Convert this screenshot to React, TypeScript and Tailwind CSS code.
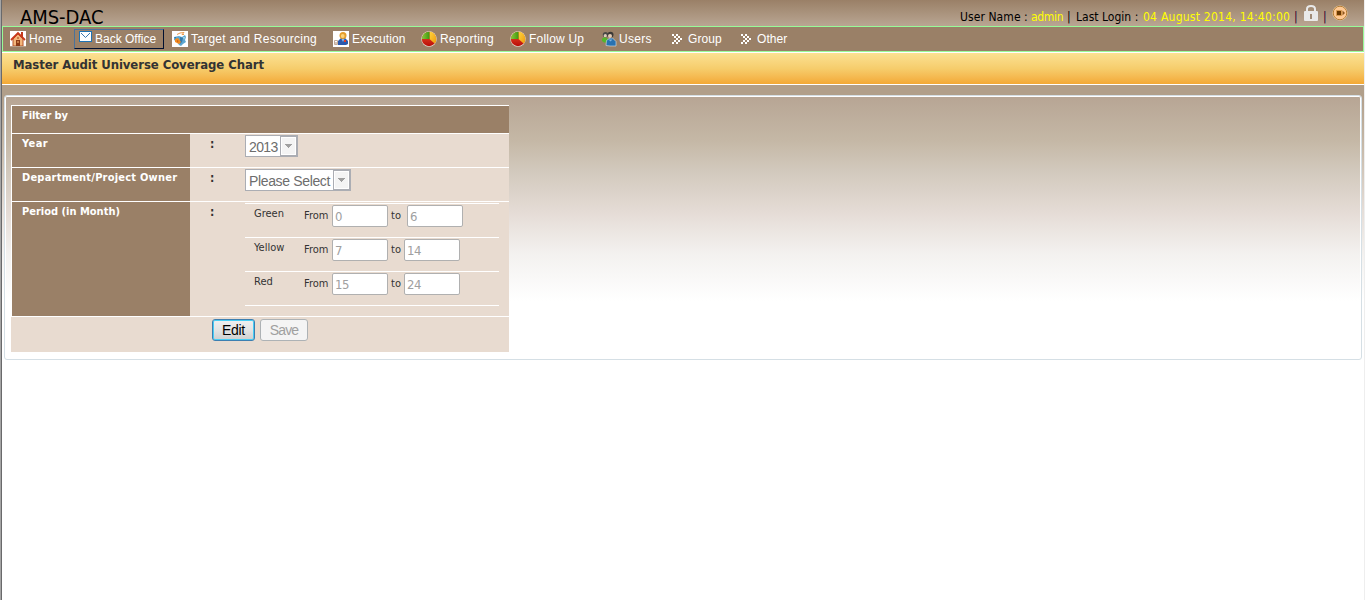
import React from "react";

const pixelFont = "font-['DejaVu_Sans_Condensed','DejaVu_Sans',sans-serif] [font-stretch:condensed]";

function HomeIcon() {
  return (
    <svg width="16" height="16" viewBox="0 0 16 16" className="block shrink-0">
      <rect width="16" height="16" fill="#fff" />
      <path d="M11 1h2v5h-2z" fill="#c43a1c" />
      <path d="M3 8l5-5 5 5v7H3z" fill="#f3b67c" stroke="#b5532a" />
      <path d="M1 9L8 2l7 7" fill="none" stroke="#c8381a" strokeWidth="1.800" />
      <path d="M6 9h4v6H6z" fill="#8b3a16" />
      <path d="M7 10h2v2H7zM7 6h2v2H7z" fill="#c77b45" />
      <path d="M0 15.500h16" stroke="#b9a08a" />
    </svg>
  );
}

function MailIcon() {
  return (
    <svg width="13" height="11" viewBox="0 0 13 11" className="block shrink-0">
      <rect x=".5" y=".5" width="12" height="10" fill="#fff" stroke="#1f73b4" />
      <path d="M2 2l4.500 4.500L11 2" fill="none" stroke="#3f78ad" />
    </svg>
  );
}

function TargetIcon() {
  return (
    <svg width="16" height="16" viewBox="0 0 16 16" className="block shrink-0">
      <rect width="16" height="16" fill="#fff" />
      <path d="M5 3.500l3-1.500 4-.5-2 2h2" fill="none" stroke="#ec9a4c" />
      <path d="M2 6l5-1 3 1 3-2 1 2-1 3 1 2-3 2-2 2-2-1-2-3-3-2z" fill="#5da6cf" />
      <path d="M8 6l3 1-1 4-2 2zM2 6l2 0 0 2z" fill="#3579aa" />
      <path d="M3 8l3-1 1.500 2L9 11l-2 2-2-1-2-1z" fill="#f18b22" />
      <path d="M5 9l1.500 1-1 1.500z" fill="#c05518" />
      <path d="M11 6l2 0-1 3z" fill="#a8d8f0" />
    </svg>
  );
}

function ExecutionIcon() {
  return (
    <svg width="16" height="16" viewBox="0 0 16 16" className="block shrink-0">
      <rect width="16" height="16" fill="#fff" />
      <path d="M5 14v-4l3-3h4l3 3v3l-2 1z" fill="#2a59ad" />
      <circle cx="10" cy="4.500" r="3.500" fill="#e59d2a" />
      <circle cx="9.700" cy="5" r="1.900" fill="#fbd27a" />
      <path d="M8.500 8l1.500 3 1.500-3" fill="#8db9ec" />
      <path d="M11 9h2v2h-2z" fill="#df3b24" />
      <path d="M1.500 9.500h3v4h-3z" fill="#fff" stroke="#c3ab98" />
      <path d="M3 11v2" stroke="#ad8c72" />
    </svg>
  );
}

function PieIcon() {
  return (
    <svg width="16" height="16" viewBox="0 0 16 16" className="block shrink-0">
      <defs>
        <linearGradient id="pieRed" x1="0" y1="0" x2="0" y2="1">
          <stop offset="0" stopColor="#f0522c" />
          <stop offset="1" stopColor="#b80c08" />
        </linearGradient>
        <linearGradient id="pieGreen" x1="0" y1="0" x2="1" y2="0">
          <stop offset="0" stopColor="#8cc63a" />
          <stop offset="1" stopColor="#3f9a10" />
        </linearGradient>
        <linearGradient id="pieGold" x1="0" y1="0" x2="1" y2="1">
          <stop offset="0" stopColor="#ffd43c" />
          <stop offset="1" stopColor="#ee9c10" />
        </linearGradient>
      </defs>
      <circle cx="8" cy="8" r="7.700" fill="#eee7de" />
      <circle cx="8" cy="8" r="7.200" fill="url(#pieRed)" />
      <path d="M8.500 8V.8A7.200 7.200 0 0 1 13.600 12.600z" fill="url(#pieGold)" />
      <path d="M8.500 8H.8A7.200 7.200 0 0 1 8.500.8z" fill="url(#pieGreen)" />
    </svg>
  );
}

function UsersIcon() {
  return (
    <svg width="16" height="16" viewBox="0 0 16 16" className="block shrink-0">
      <circle cx="4.500" cy="3.700" r="2.700" fill="#4b4a48" />
      <circle cx="4.300" cy="4.700" r="1.600" fill="#dccbb9" />
      <path d="M1 7.500l3-1.500 3 2v3.500H3L1 10z" fill="#54b52c" />
      <path d="M5 14.500l.5-5L9 7h2.500l3.500 3.500v4.500H9z" fill="#2872b1" stroke="#d8e3ea" strokeWidth=".6" />
      <circle cx="9.500" cy="3.700" r="3" fill="#3b3937" />
      <circle cx="9" cy="5" r="2" fill="#e3cbb4" />
      <path d="M7.500 8.500l2 2 2-2" fill="#7fb5e2" />
    </svg>
  );
}

function ChevronsIcon() {
  return (
    <svg width="11" height="10" viewBox="0 0 11 10" shapeRendering="crispEdges" className="block shrink-0">
      <path
        fill="#fff"
        d="M0 0h2v2H0zM2 2h2v2H2zM4 4h2v2H4zM2 6h2v2H2zM0 8h2v2H0zM4 0h2v2H4zM6 2h2v2H6zM8 4h2v2H8zM6 6h2v2H6zM4 8h2v2H4z"
      />
    </svg>
  );
}

function LockIcon() {
  return (
    <svg width="14" height="16" viewBox="0 0 14 16" className="block shrink-0">
      <path d="M3 7V4q0-3 4-3t4 3v3" fill="none" stroke="#e9e9e9" strokeWidth="2" />
      <rect y="6" width="14" height="10" rx="1" fill="#e9e9e9" />
      <path d="M6 9h2v5H6z" fill="#a08b77" />
    </svg>
  );
}

function LogoutIcon() {
  return (
    <svg width="16" height="16" viewBox="0 0 16 16" className="block shrink-0">
      <circle cx="8" cy="8" r="7.600" fill="#f3dcb4" />
      <circle cx="8" cy="8" r="6.800" fill="#ffc994" stroke="#b27a34" />
      <path d="M4.500 5.500h5v5h-5z" fill="#693700" stroke="#d99a50" />
      <path d="M10.500 5.500L13 8l-2.500 2.500z" fill="#8f571b" />
    </svg>
  );
}

function NavText({ children, className }: { children: React.ReactNode; className: string }) {
  return <span className={`whitespace-nowrap text-[12px] leading-[16px] text-white ${className}`}>{children}</span>;
}

function Select({ value, className }: { value: string; className: string }) {
  return (
    <div className={`flex h-[22px] border border-[#abadb3] bg-white text-[14px] text-[#6d6d6d] ${className}`}>
      <span className="min-w-0 flex-1 whitespace-nowrap pl-[3px] leading-[23px]">{value}</span>
      <span className="flex w-[17px] shrink-0 justify-center border border-[#abadb3] bg-[#f4f4f4] pt-[7px] shadow-[inset_0_0_0_1px_#fff]">
        <svg width="7" height="4" viewBox="0 0 7 4" shapeRendering="crispEdges">
          <path d="M0 0h7L3.500 4z" fill="#a0a0a0" />
        </svg>
      </span>
    </div>
  );
}

function MonthBox({ value }: { value: string }) {
  return (
    <div className="h-[22px] w-[56px] rounded-[2px] border border-[#b0b0b0] bg-white pl-[2px] font-['DejaVu_Sans_Condensed','DejaVu_Sans',sans-serif] text-[13px] leading-[22px] tracking-[-0.4px] text-[#a0a0a0] [font-stretch:condensed]">
      {value}
    </div>
  );
}

function PeriodRow({ label, from, to, gap }: { label: string; from: string; to: string; gap: string }) {
  return (
    <div className="flex h-[34px] border-b border-white pl-[9px] text-[11px] leading-[14px] text-[#333]">
      <span className="w-[50px] pt-[3px]">{label}</span>
      <span className="w-[28px] pt-[5px]">From</span>
      <div className="pt-px"><MonthBox value={from} /></div>
      <span className={`pl-[3px] pt-[5px] ${gap}`}>to</span>
      <div className="pt-px"><MonthBox value={to} /></div>
    </div>
  );
}

function FormRow({ label, height, tracking, children }: { label: string; height: string; tracking: string; children: React.ReactNode }) {
  return (
    <div className={`flex border-b border-white ${height}`}>
      <div className={`w-[178px] shrink-0 whitespace-nowrap bg-[#9a8067] pl-[10px] pt-[3px] text-[11px] font-bold leading-[14px] text-white ${tracking}`}>
        {label}
      </div>
      <div className="w-[55px] shrink-0 pl-[20px] pt-[3px] text-[12px] font-bold leading-[14px] text-[#333]">:</div>
      {children}
    </div>
  );
}

export default function App() {
  return (
    <div className="flex h-[600px] w-[1366px] overflow-hidden bg-white font-['Liberation_Sans',Arial,sans-serif]">
      <div className="w-[2px] shrink-0 border-r border-[#69696b] bg-[#a5a5a5]" />
      <div className="flex w-[1362px] flex-col bg-[linear-gradient(to_bottom,#b19f8a_0px,#b19f8a_95px,#c8bbab_150px,#e5ddd7_210px,#f4f2f0_255px,#fff_300px)]">
        <header className={`flex h-[26px] shrink-0 items-start justify-between bg-linear-to-b from-[#9a8067] to-[#b9a693] text-black ${pixelFont}`}>
          <h1 className="whitespace-nowrap pl-[18px] pt-[6px] text-[20px] leading-[22px] tracking-[-0.05px]">AMS-DAC</h1>
          <div className="flex whitespace-nowrap pr-[16px] text-[12px] leading-[16px]">
            <span className="w-[71px] pt-[9px] tracking-[0.08px]">User Name :</span>
            <span className="w-[36px] pt-[9px] tracking-[-0.3px] text-[#ff0]">admin</span>
            <span className="w-[9px] pt-[9px]">|</span>
            <span className="w-[67px] pt-[9px] tracking-[0.02px]">Last Login :</span>
            <span className="w-[151px] pt-[9px] tracking-[0.25px] text-[#ff0]">04 August 2014, 14:40:00</span>
            <span className="w-[10px] pt-[9px] text-[#300030]">|</span>
            <span className="w-[19px] pt-[5px]"><LockIcon /></span>
            <span className="w-[9px] pt-[9px] text-[#300030]">|</span>
            <span className="pt-[5px]"><LogoutIcon /></span>
          </div>
        </header>

        <nav className="flex h-[26px] shrink-0 border border-[#98fb98] bg-[#9a8067] pl-[7px]">
          <div className="flex w-[64px] gap-[3px] pt-[4px]"><HomeIcon /><NavText className="tracking-[0.35px]">Home</NavText></div>
          <div className="mt-[2px] flex h-[20px] w-[90px] gap-[3px] border border-b-[#001030] border-l-[#4a729c] border-r-[#001030] border-t-[#4a729c] pl-[4px] pt-px">
            <MailIcon /><NavText className="tracking-[0px]">Back Office</NavText>
          </div>
          <div className="ml-[8px] flex w-[161px] gap-[3px] pt-[4px]"><TargetIcon /><NavText className="tracking-[0.25px]">Target and Resourcing</NavText></div>
          <div className="flex w-[88px] gap-[3px] pt-[4px]"><ExecutionIcon /><NavText className="tracking-[0.1px]">Execution</NavText></div>
          <div className="flex w-[89px] gap-[3px] pt-[4px]"><PieIcon /><NavText className="tracking-[0.2px]">Reporting</NavText></div>
          <div className="flex w-[91px] gap-[3px] pt-[4px]"><PieIcon /><NavText className="tracking-[0.2px]">Follow Up</NavText></div>
          <div className="flex w-[71px] gap-[2px] pt-[4px]"><UsersIcon /><NavText className="tracking-[0.3px]">Users</NavText></div>
          <div className="flex w-[69px] gap-[5px] pt-[4px]"><div className="pt-[3px]"><ChevronsIcon /></div><NavText className="tracking-[0.1px]">Group</NavText></div>
          <div className="flex gap-[5px] pt-[4px]"><div className="pt-[3px]"><ChevronsIcon /></div><NavText className="tracking-[0.05px]">Other</NavText></div>
        </nav>

        <h2 className={`h-[33px] shrink-0 border-y border-white bg-linear-to-b from-[#fbe192] via-[#f6cd6c] to-[#f3a935] pl-[11px] pt-[4px] text-[13px] font-bold leading-[16px] tracking-[-0.08px] text-[#333] ${pixelFont}`}>
          Master Audit Universe Coverage Chart
        </h2>

        <main className={`ml-[2px] mt-[10px] flex h-[265px] w-[1358px] shrink-0 flex-col rounded-[3px] border border-[#d5dfe5] bg-[linear-gradient(to_bottom,#b7a594_0px,#c5b8a6_45px,#d2c9bd_75px,#e5dcd6_117px,#f3f1ef_157px,#fff_205px)] pl-[6px] pt-[9px] shadow-[inset_0_0_0_1px_#fff] ${pixelFont}`}>
          <section className="w-[498px] bg-[#e8dbd0]">
            <div className="border-l border-t border-white">
              <div className="h-[28px] border-b border-white bg-[#9a8067] pl-[10px] pt-[3px] text-[11px] font-bold leading-[14px] tracking-[-0.1px] text-white">Filter by</div>
              <FormRow label="Year" height="h-[34px]" tracking="tracking-[0.4px]">
                <div className="pt-px font-['Liberation_Sans',Arial,sans-serif]"><Select value="2013" className="w-[53px] tracking-[-0.6px]" /></div>
              </FormRow>
              <FormRow label="Department/Project Owner" height="h-[34px]" tracking="tracking-[0.22px]">
                <div className="pt-px font-['Liberation_Sans',Arial,sans-serif]"><Select value="Please Select" className="w-[106px] tracking-[-0.35px]" /></div>
              </FormRow>
              <FormRow label="Period (in Month)" height="h-[115px]" tracking="tracking-[0px]">
                <div className="mt-px h-[103px] w-[254px] border-t border-white">
                  <PeriodRow label="Green" from="0" to="6" gap="w-[19px]" />
                  <PeriodRow label="Yellow" from="7" to="14" gap="w-[16px]" />
                  <PeriodRow label="Red" from="15" to="24" gap="w-[16px]" />
                </div>
              </FormRow>
            </div>
            <div className="flex h-[35px] gap-[5px] pl-[201px] pt-[2px] font-['Liberation_Sans',Arial,sans-serif] text-[14px]">
              <button className="h-[22px] w-[43px] rounded-[3px] border border-[#3c7fb1] bg-linear-to-b from-[#f0f0f0] via-[#e4e4e4] to-[#cfcfcf] text-[14px] leading-[20px] tracking-[-0.3px] text-black shadow-[inset_0_0_0_1px_#48cdf4]">Edit</button>
              <button disabled className="h-[22px] w-[48px] rounded-[3px] border border-[#adb2b5] bg-[#f4f4f4] leading-[20px] tracking-[-1px] text-[#a0a0a0]"><span className="tracking-[-0.9px]">Save</span></button>
            </div>
          </section>
        </main>
      </div>
      <div className="w-[2px] shrink-0 border-l border-[#eee] bg-white" />
    </div>
  );
}
